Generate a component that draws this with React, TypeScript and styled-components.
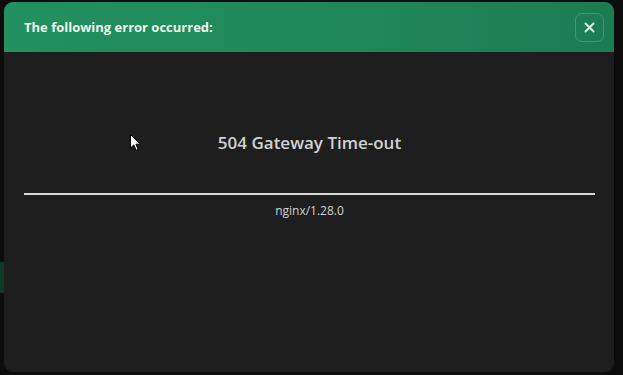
import React from 'react';
import styled, { createGlobalStyle } from 'styled-components';

const GlobalStyle = createGlobalStyle`
  html, body {
    margin: 0;
    padding: 0;
    background: #0c0c0c;
    font-family: "Open Sans", "Liberation Sans", sans-serif;
  }
`;

const Page = styled.div`
  position: relative;
  width: 623px;
  height: 375px;
  overflow: hidden;
  background: #0c0c0c;
`;

// part of the app behind the dialog, peeking out on the left
const BehindButton = styled.div`
  position: absolute;
  left: 0;
  top: 262px;
  width: 6px;
  height: 31px;
  background: #0b3a26;
`;

const Overlay = styled.div`
  position: relative;
  display: flex;
  padding: 2px 9px 3px 4px;
  height: 100%;
  box-sizing: border-box;
`;

const Dialog = styled.div`
  flex: 1;
  display: flex;
  flex-direction: column;
  border-radius: 9px;
  overflow: hidden;
  background: #1e1e1e;
`;

const Header = styled.div`
  height: 50px;
  display: flex;
  align-items: center;
  justify-content: space-between;
  padding: 0 10px 0 20px;
  background: linear-gradient(90deg, #22905f 0%, #1f8758 60%, #1c7c51 100%);
`;

const Title = styled.h2`
  margin: 0;
  font-size: 13px;
  font-weight: 700;
  color: #eef5f0;
`;

const CloseButton = styled.button`
  width: 29px;
  height: 29px;
  display: flex;
  align-items: center;
  justify-content: center;
  padding: 0;
  border: 1px solid rgba(255, 255, 255, 0.18);
  border-radius: 7px;
  background: transparent;
  color: #dfe9e3;
  cursor: pointer;
`;

const Content = styled.div`
  flex: 1;
  padding: 77px 19px 0 20px;
  text-align: center;
  color: #d2d2d2;
`;

const Heading = styled.h1`
  margin: 0;
  font-size: 17px;
  font-weight: 600;
  line-height: 28px;
`;

const Rule = styled.hr`
  margin: 36px 0 0;
  border: none;
  height: 2px;
  background: #d8d8d8;
`;

const Server = styled.div`
  margin-top: 7px;
  font-size: 12px;
  line-height: 17px;
`;

const Cursor = styled.svg`
  position: absolute;
  left: 130px;
  top: 134px;
`;

export default function App() {
  return (
    <Page>
      <GlobalStyle />
      <BehindButton />
      <Overlay>
        <Dialog>
          <Header>
            <Title>The following error occurred:</Title>
            <CloseButton aria-label="Close">
              <svg width="11" height="11" viewBox="0 0 11 11">
                <path d="M1.5 1.5 L9.5 9.5 M9.5 1.5 L1.5 9.5" stroke="currentColor" strokeWidth="2" strokeLinecap="round" />
              </svg>
            </CloseButton>
          </Header>
          <Content>
            <Heading>504 Gateway Time-out</Heading>
            <Rule />
            <Server>nginx/1.28.0</Server>
          </Content>
        </Dialog>
      </Overlay>
      <Cursor width="12" height="18" viewBox="0 0 12 18">
        <path d="M0.5 0.5 L0.5 14 L3.8 10.9 L6.2 16.3 L8.2 15.4 L5.9 10.2 L10.4 10.2 Z" fill="#fff" stroke="#000" strokeWidth="1" />
      </Cursor>
    </Page>
  );
}
